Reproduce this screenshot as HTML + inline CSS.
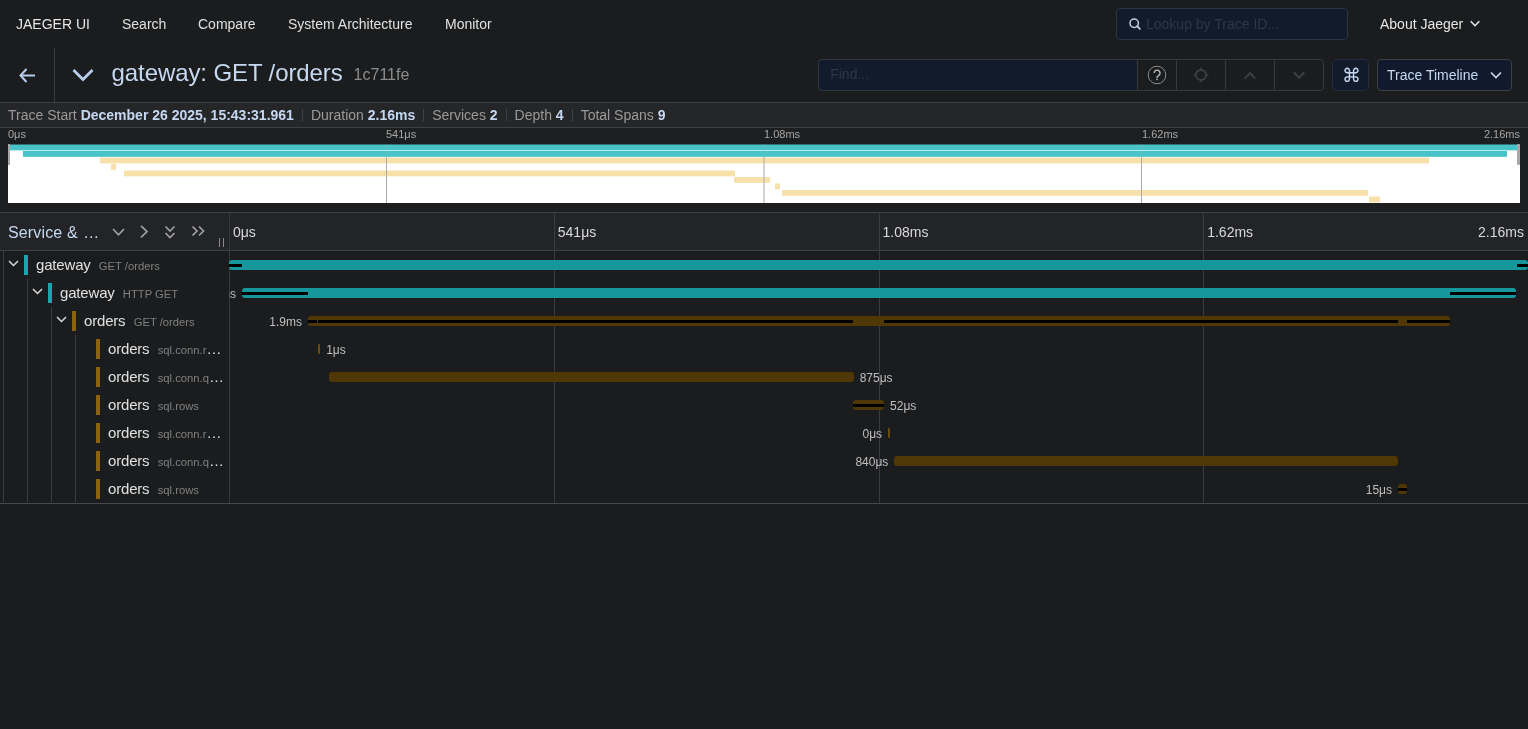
<!DOCTYPE html>
<html><head><meta charset="utf-8">
<style>
*{box-sizing:border-box;margin:0;padding:0}
html,body{width:1528px;height:729px;overflow:hidden;background:#1b1c1e;font-family:"Liberation Sans",sans-serif;color:#d9d9d9}
.abs{position:absolute}
.t{position:absolute;white-space:pre;line-height:1}
svg{position:absolute;overflow:visible}
</style></head><body><div style="position:absolute;left:0;top:0;width:1528px;height:729px;overflow:hidden;will-change:transform">

<!-- NAV -->
<div class="abs" style="left:0;top:0;width:1528px;height:48px;background:#1b1c1e"></div>
<div class="t" style="left:16px;top:17px;font-size:14px;color:#e6e6e6">JAEGER UI</div>
<div class="t" style="left:122px;top:17px;font-size:14px;color:#e0e0e0">Search</div>
<div class="t" style="left:198px;top:17px;font-size:14px;color:#e0e0e0">Compare</div>
<div class="t" style="left:288px;top:17px;font-size:14px;color:#e0e0e0">System Architecture</div>
<div class="t" style="left:445px;top:17px;font-size:14px;color:#e0e0e0">Monitor</div>

<div class="abs" style="left:1116px;top:8px;width:232px;height:32px;background:#111b2b;border:1px solid #2e3541;border-radius:4px"></div>
<svg style="left:1129px;top:18px" width="13" height="13" viewBox="0 0 13 13"><circle cx="5.2" cy="5.2" r="4.2" fill="none" stroke="#c0cfe3" stroke-width="1.5"/><line x1="8.2" y1="8.2" x2="10.9" y2="10.9" stroke="#c0cfe3" stroke-width="1.8" stroke-linecap="round"/></svg>
<div class="t" style="left:1146px;top:17px;font-size:14px;color:#2c3748">Lookup by Trace ID...</div>
<div class="t" style="left:1380px;top:17px;font-size:14px;color:#e6e6e6">About Jaeger</div>
<svg style="left:1470px;top:20px" width="10" height="8" viewBox="0 0 10 8"><polyline points="0.7,1.2 5,5.7 9.3,1.2" fill="none" stroke="#e6e6e6" stroke-width="1.6"/></svg>

<!-- TRACE HEADER -->
<div class="abs" style="left:54px;top:48px;width:1px;height:54px;background:#3a3b3e"></div>
<svg style="left:19px;top:68px" width="17" height="15" viewBox="0 0 17 15"><polyline points="7.5,1 1.5,7.5 7.5,14" fill="none" stroke="#b6cdeb" stroke-width="2"/><line x1="1.5" y1="7.5" x2="16" y2="7.5" stroke="#b6cdeb" stroke-width="2"/></svg>
<svg style="left:72px;top:68px" width="22" height="14" viewBox="0 0 22 14"><polyline points="1.5,2 11,11.5 20.5,2" fill="none" stroke="#b6cdeb" stroke-width="2.8"/></svg>
<div class="t" style="left:111.6px;top:61px;font-size:24px;letter-spacing:-0.1px;color:#c6d8f0">gateway: GET /orders</div>
<div class="t" style="left:353.6px;top:67px;font-size:16px;color:#8c8c8c">1c711fe</div>

<div class="abs" style="left:818px;top:59px;width:320px;height:32px;background:#111b2b;border:1px solid #2e3541;border-right:none;border-radius:4px 0 0 4px"></div>
<div class="t" style="left:830.2px;top:67.3px;font-size:14px;color:#2c3748">Find...</div>
<div class="abs" style="left:1137px;top:59px;width:187px;height:32px;border:1px solid #38393c;border-radius:0 4px 4px 0"></div>
<div class="abs" style="left:1176px;top:59px;width:1px;height:32px;background:#38393c"></div>
<div class="abs" style="left:1225px;top:59px;width:1px;height:32px;background:#38393c"></div>
<div class="abs" style="left:1274px;top:59px;width:1px;height:32px;background:#38393c"></div>
<svg style="left:1147px;top:65px" width="20" height="20" viewBox="0 0 20 20"><circle cx="10" cy="10" r="8.8" fill="none" stroke="#8c8c8c" stroke-width="1"/><path d="M7.2,8.1 A2.9,2.9 0 1 1 11.5,10.6 C10.5,11.2 10,11.7 10,12.6 V13" fill="none" stroke="#bdbdbd" stroke-width="1.3"/><circle cx="10" cy="14.4" r="0.8" fill="#bdbdbd"/></svg>
<svg style="left:1193px;top:67px" width="16" height="16" viewBox="0 0 16 16"><circle cx="8" cy="8" r="5" fill="none" stroke="#3d3e41" stroke-width="2"/><line x1="8" y1="0.5" x2="8" y2="3" stroke="#3d3e41" stroke-width="1.6"/><line x1="8" y1="13" x2="8" y2="15.5" stroke="#3d3e41" stroke-width="1.6"/><line x1="0.5" y1="8" x2="3" y2="8" stroke="#3d3e41" stroke-width="1.6"/><line x1="13" y1="8" x2="15.5" y2="8" stroke="#3d3e41" stroke-width="1.6"/></svg>
<svg style="left:1244px;top:71px" width="12" height="9" viewBox="0 0 12 9"><polyline points="0.8,7.6 6,2 11.2,7.6" fill="none" stroke="#3d3e41" stroke-width="2"/></svg>
<svg style="left:1293px;top:71px" width="12" height="9" viewBox="0 0 12 9"><polyline points="0.8,1.2 6,6.8 11.2,1.2" fill="none" stroke="#3d3e41" stroke-width="2"/></svg>

<div class="abs" style="left:1332px;top:59px;width:37px;height:32px;background:#111b2b;border:1px solid #262c42;border-radius:5px"></div>
<div class="t" style="left:1341.5px;top:65.5px;font-size:19px;color:#c6d8f0">⌘</div>
<div class="abs" style="left:1377px;top:59px;width:135px;height:32px;background:#111a2c;border:1px solid #3c3f47;border-radius:4px"></div>
<div class="t" style="left:1387px;top:68px;font-size:14px;color:#c6d8f0">Trace Timeline</div>
<svg style="left:1490px;top:71px" width="12" height="8" viewBox="0 0 12 8"><polyline points="1,1.5 6,6.5 11,1.5" fill="none" stroke="#c6d8f0" stroke-width="1.7"/></svg>


<!-- STATS BAR -->
<div class="abs" style="left:0;top:102px;width:1528px;height:26px;background:#252628;border-top:1px solid #3f4043;border-bottom:1px solid #3f4043"></div>
<div class="abs" style="left:8px;top:108px;height:14px;display:flex;align-items:flex-start;font-size:14px;line-height:1;white-space:pre">
<span style="color:#9a9a9a">Trace Start <b style="color:#c6d8f0;font-weight:700">December 26 2025, 15:43:31.961</b></span>
<span style="display:inline-block;width:1px;height:12px;margin:1px 8px 0 8px;background:#414246"></span>
<span style="color:#9a9a9a">Duration <b style="color:#c6d8f0;font-weight:700">2.16ms</b></span>
<span style="display:inline-block;width:1px;height:12px;margin:1px 8px 0 8px;background:#414246"></span>
<span style="color:#9a9a9a">Services <b style="color:#c6d8f0;font-weight:700">2</b></span>
<span style="display:inline-block;width:1px;height:12px;margin:1px 8px 0 8px;background:#414246"></span>
<span style="color:#9a9a9a">Depth <b style="color:#c6d8f0;font-weight:700">4</b></span>
<span style="display:inline-block;width:1px;height:12px;margin:1px 8px 0 8px;background:#414246"></span>
<span style="color:#9a9a9a">Total Spans <b style="color:#c6d8f0;font-weight:700">9</b></span>
</div>
<!-- MINIMAP -->
<div class="abs" style="left:0;top:128px;width:1528px;height:84px;background:#1d1e20"></div>
<div class="t" style="left:8px;top:128.5px;font-size:11px;color:#a6a6a6">0μs</div>
<div class="t" style="left:386px;top:128.5px;font-size:11px;color:#a6a6a6">541μs</div>
<div class="t" style="left:764px;top:128.5px;font-size:11px;color:#a6a6a6">1.08ms</div>
<div class="t" style="left:1142px;top:128.5px;font-size:11px;color:#a6a6a6">1.62ms</div>
<div class="t" style="right:8px;top:128.5px;font-size:11px;color:#a6a6a6">2.16ms</div>
<div class="abs" style="left:8px;top:144px;width:1512px;height:60px;overflow:hidden">
<div class="abs" style="left:0;top:1px;width:1512px;height:58px;background:#fff"></div>
<div class="abs" style="left:0;top:59px;width:1512px;height:1px;background:#fff;opacity:0.0"></div>
<div class="abs" style="left:0.00px;top:0px;width:1512.00px;height:1px;background:#48c3c8;opacity:0.50"></div>
<div class="abs" style="left:0.00px;top:1px;width:1512.00px;height:1px;background:#48c3c8;opacity:1.00"></div>
<div class="abs" style="left:0.00px;top:2px;width:1512.00px;height:1px;background:#48c3c8;opacity:1.00"></div>
<div class="abs" style="left:0.00px;top:3px;width:1512.00px;height:1px;background:#48c3c8;opacity:1.00"></div>
<div class="abs" style="left:0.00px;top:4px;width:1512.00px;height:1px;background:#48c3c8;opacity:1.00"></div>
<div class="abs" style="left:0.00px;top:5px;width:1512.00px;height:1px;background:#48c3c8;opacity:1.00"></div>
<div class="abs" style="left:0.00px;top:6px;width:1512.00px;height:1px;background:#48c3c8;opacity:0.35"></div>
<div class="abs" style="left:15.16px;top:7px;width:1483.35px;height:1px;background:#48c3c8;opacity:1.00"></div>
<div class="abs" style="left:15.16px;top:8px;width:1483.35px;height:1px;background:#48c3c8;opacity:1.00"></div>
<div class="abs" style="left:15.16px;top:9px;width:1483.35px;height:1px;background:#48c3c8;opacity:1.00"></div>
<div class="abs" style="left:15.16px;top:10px;width:1483.35px;height:1px;background:#48c3c8;opacity:1.00"></div>
<div class="abs" style="left:15.16px;top:11px;width:1483.35px;height:1px;background:#48c3c8;opacity:1.00"></div>
<div class="abs" style="left:15.16px;top:12px;width:1483.35px;height:1px;background:#48c3c8;opacity:0.85"></div>
<div class="abs" style="left:91.95px;top:13px;width:1328.94px;height:1px;background:#f8e0aa;opacity:0.50"></div>
<div class="abs" style="left:91.95px;top:14px;width:1328.94px;height:1px;background:#f8e0aa;opacity:1.00"></div>
<div class="abs" style="left:91.95px;top:15px;width:1328.94px;height:1px;background:#f8e0aa;opacity:1.00"></div>
<div class="abs" style="left:91.95px;top:16px;width:1328.94px;height:1px;background:#f8e0aa;opacity:1.00"></div>
<div class="abs" style="left:91.95px;top:17px;width:1328.94px;height:1px;background:#f8e0aa;opacity:1.00"></div>
<div class="abs" style="left:91.95px;top:18px;width:1328.94px;height:1px;background:#f8e0aa;opacity:1.00"></div>
<div class="abs" style="left:91.95px;top:19px;width:1328.94px;height:1px;background:#f8e0aa;opacity:0.35"></div>
<div class="abs" style="left:102.71px;top:20px;width:4.95px;height:1px;background:#f8e0aa;opacity:1.00"></div>
<div class="abs" style="left:102.71px;top:21px;width:4.95px;height:1px;background:#f8e0aa;opacity:1.00"></div>
<div class="abs" style="left:102.71px;top:22px;width:4.95px;height:1px;background:#f8e0aa;opacity:1.00"></div>
<div class="abs" style="left:102.71px;top:23px;width:4.95px;height:1px;background:#f8e0aa;opacity:1.00"></div>
<div class="abs" style="left:102.71px;top:24px;width:4.95px;height:1px;background:#f8e0aa;opacity:1.00"></div>
<div class="abs" style="left:102.71px;top:25px;width:4.95px;height:1px;background:#f8e0aa;opacity:0.85"></div>
<div class="abs" style="left:116.40px;top:26px;width:610.67px;height:1px;background:#f8e0aa;opacity:0.50"></div>
<div class="abs" style="left:116.40px;top:27px;width:610.67px;height:1px;background:#f8e0aa;opacity:1.00"></div>
<div class="abs" style="left:116.40px;top:28px;width:610.67px;height:1px;background:#f8e0aa;opacity:1.00"></div>
<div class="abs" style="left:116.40px;top:29px;width:610.67px;height:1px;background:#f8e0aa;opacity:1.00"></div>
<div class="abs" style="left:116.40px;top:30px;width:610.67px;height:1px;background:#f8e0aa;opacity:1.00"></div>
<div class="abs" style="left:116.40px;top:31px;width:610.67px;height:1px;background:#f8e0aa;opacity:1.00"></div>
<div class="abs" style="left:116.40px;top:32px;width:610.67px;height:1px;background:#f8e0aa;opacity:0.35"></div>
<div class="abs" style="left:725.96px;top:33px;width:36.33px;height:1px;background:#f8e0aa;opacity:1.00"></div>
<div class="abs" style="left:725.96px;top:34px;width:36.33px;height:1px;background:#f8e0aa;opacity:1.00"></div>
<div class="abs" style="left:725.96px;top:35px;width:36.33px;height:1px;background:#f8e0aa;opacity:1.00"></div>
<div class="abs" style="left:725.96px;top:36px;width:36.33px;height:1px;background:#f8e0aa;opacity:1.00"></div>
<div class="abs" style="left:725.96px;top:37px;width:36.33px;height:1px;background:#f8e0aa;opacity:1.00"></div>
<div class="abs" style="left:725.96px;top:38px;width:36.33px;height:1px;background:#f8e0aa;opacity:0.85"></div>
<div class="abs" style="left:767.04px;top:39px;width:4.95px;height:1px;background:#f8e0aa;opacity:0.50"></div>
<div class="abs" style="left:767.04px;top:40px;width:4.95px;height:1px;background:#f8e0aa;opacity:1.00"></div>
<div class="abs" style="left:767.04px;top:41px;width:4.95px;height:1px;background:#f8e0aa;opacity:1.00"></div>
<div class="abs" style="left:767.04px;top:42px;width:4.95px;height:1px;background:#f8e0aa;opacity:1.00"></div>
<div class="abs" style="left:767.04px;top:43px;width:4.95px;height:1px;background:#f8e0aa;opacity:1.00"></div>
<div class="abs" style="left:767.04px;top:44px;width:4.95px;height:1px;background:#f8e0aa;opacity:1.00"></div>
<div class="abs" style="left:767.04px;top:45px;width:4.95px;height:1px;background:#f8e0aa;opacity:0.35"></div>
<div class="abs" style="left:774.17px;top:46px;width:586.21px;height:1px;background:#f8e0aa;opacity:1.00"></div>
<div class="abs" style="left:774.17px;top:47px;width:586.21px;height:1px;background:#f8e0aa;opacity:1.00"></div>
<div class="abs" style="left:774.17px;top:48px;width:586.21px;height:1px;background:#f8e0aa;opacity:1.00"></div>
<div class="abs" style="left:774.17px;top:49px;width:586.21px;height:1px;background:#f8e0aa;opacity:1.00"></div>
<div class="abs" style="left:774.17px;top:50px;width:586.21px;height:1px;background:#f8e0aa;opacity:1.00"></div>
<div class="abs" style="left:774.17px;top:51px;width:586.21px;height:1px;background:#f8e0aa;opacity:0.85"></div>
<div class="abs" style="left:1360.66px;top:52px;width:10.97px;height:1px;background:#f8e0aa;opacity:0.50"></div>
<div class="abs" style="left:1360.66px;top:53px;width:10.97px;height:1px;background:#f8e0aa;opacity:1.00"></div>
<div class="abs" style="left:1360.66px;top:54px;width:10.97px;height:1px;background:#f8e0aa;opacity:1.00"></div>
<div class="abs" style="left:1360.66px;top:55px;width:10.97px;height:1px;background:#f8e0aa;opacity:1.00"></div>
<div class="abs" style="left:1360.66px;top:56px;width:10.97px;height:1px;background:#f8e0aa;opacity:1.00"></div>
<div class="abs" style="left:1360.66px;top:57px;width:10.97px;height:1px;background:#f8e0aa;opacity:1.00"></div>
<div class="abs" style="left:1360.66px;top:58px;width:10.97px;height:1px;background:#f8e0aa;opacity:0.35"></div>
<div class="abs" style="left:378px;top:0;width:1px;height:13px;background:#aaa;opacity:0.25"></div>
<div class="abs" style="left:755px;top:0;width:2px;height:13px;background:rgba(170,170,170,0.12)"></div>
<div class="abs" style="left:1133px;top:0;width:1px;height:13px;background:#aaa;opacity:0.25"></div>
<div class="abs" style="left:378px;top:13px;width:1px;height:46px;background:#aaa"></div>
<div class="abs" style="left:755px;top:13px;width:2px;height:46px;background:rgba(170,170,170,0.5)"></div>
<div class="abs" style="left:1133px;top:13px;width:1px;height:46px;background:#aaa"></div>
</div>
<div class="abs" style="left:8px;top:144px;width:2px;height:21px;background:#a8a8a8"></div>
<div class="abs" style="left:1517px;top:144px;width:3px;height:21px;background:#a8a8a8;border-radius:1px"></div>
<!-- SPAN HEADER -->
<div class="abs" style="left:0;top:212px;width:1528px;height:39px;background:#232427;border-top:1px solid #3f4043;border-bottom:1px solid #3f4043"></div>
<div class="t" style="left:8px;top:224.5px;font-size:16px;color:#c6d8f0"><span style="letter-spacing:0.15px">Service &amp; </span><span style="margin-left:0.8px">…</span></div>
<svg style="left:112px;top:227.7px" width="14" height="9" viewBox="0 0 14 9"><polyline points="1,1 6.5,6.8 12,1" fill="none" stroke="#a0a0a0" stroke-width="1.7"/></svg>
<svg style="left:140px;top:224.8px" width="9" height="14" viewBox="0 0 9 14"><polyline points="1,0.8 7,6.6 1,12.4" fill="none" stroke="#a0a0a0" stroke-width="1.7"/></svg>
<svg style="left:164px;top:224.9px" width="13" height="15" viewBox="0 0 13 15"><polyline points="1.5,1.5 6,6 10.5,1.5" fill="none" stroke="#a0a0a0" stroke-width="1.7"/><polyline points="1.5,8 6,12.5 10.5,8" fill="none" stroke="#a0a0a0" stroke-width="1.7"/></svg>
<svg style="left:190.8px;top:225px" width="15" height="13" viewBox="0 0 15 13"><polyline points="1.5,1.5 6,6 1.5,10.5" fill="none" stroke="#a0a0a0" stroke-width="1.7"/><polyline points="8,1.5 12.5,6 8,10.5" fill="none" stroke="#a0a0a0" stroke-width="1.7"/></svg>
<div class="abs" style="left:219px;top:238px;width:1px;height:9px;background:#8a8a8a"></div>
<div class="abs" style="left:223px;top:238px;width:1px;height:9px;background:#8a8a8a"></div>
<div class="abs" style="left:229px;top:212px;width:1px;height:291px;background:#38393c"></div>
<div class="t" style="left:233.0px;top:224.8px;font-size:14px;color:#d9d9d9">0μs</div>
<div class="abs" style="left:554px;top:213px;width:1px;height:290px;background:#3a3b3e"></div>
<div class="t" style="left:557.8px;top:224.8px;font-size:14px;color:#d9d9d9">541μs</div>
<div class="abs" style="left:879px;top:213px;width:1px;height:290px;background:#3a3b3e"></div>
<div class="t" style="left:882.5px;top:224.8px;font-size:14px;color:#d9d9d9">1.08ms</div>
<div class="abs" style="left:1203px;top:213px;width:1px;height:290px;background:#3a3b3e"></div>
<div class="t" style="left:1207.2px;top:224.8px;font-size:14px;color:#d9d9d9">1.62ms</div>
<div class="t" style="right:4px;top:224.8px;font-size:14px;color:#d9d9d9">2.16ms</div>
<!-- ROWS -->
<div class="abs" style="left:0;top:503px;width:1528px;height:1px;background:#47484b"></div>
<div class="abs" style="left:229.0px;top:260px;width:1299.0px;height:10px;background:#16979c;border-radius:3px"></div>
<div class="abs" style="left:229.0px;top:264px;width:13.0px;height:3px;background:#000"></div>
<div class="abs" style="left:1517.0px;top:264px;width:11.0px;height:3px;background:#000"></div>
<div class="abs" style="left:242.0px;top:288px;width:1274.3px;height:10px;background:#16979c;border-radius:3px"></div>
<div class="abs" style="left:242.0px;top:292px;width:66.0px;height:3px;background:#000"></div>
<div class="abs" style="left:1450.0px;top:292px;width:66.3px;height:3px;background:#000"></div>
<div class="t" style="right:1292.0px;top:288px;font-size:12px;color:#bfbfbf">2.12ms</div>
<div class="abs" style="left:308.0px;top:316px;width:1142.0px;height:10px;background:#4f3806;border-radius:3px"></div>
<div class="abs" style="left:308.0px;top:320px;width:9.0px;height:3px;background:#000"></div>
<div class="abs" style="left:318.0px;top:320px;width:535.0px;height:3px;background:#000"></div>
<div class="abs" style="left:884.0px;top:320px;width:514.0px;height:3px;background:#000"></div>
<div class="abs" style="left:1407.0px;top:320px;width:43.0px;height:3px;background:#000"></div>
<div class="t" style="right:1226.0px;top:316px;font-size:12px;color:#bfbfbf">1.9ms</div>
<div class="abs" style="left:317.7px;top:344px;width:2px;height:10px;background:#6d4c0f;border-radius:1px"></div>
<div class="t" style="left:326.2px;top:344px;font-size:12px;color:#bfbfbf">1μs</div>
<div class="abs" style="left:329.0px;top:372px;width:524.7px;height:10px;background:#4f3806;border-radius:3px"></div>
<div class="t" style="left:859.7px;top:372px;font-size:12px;color:#bfbfbf">875μs</div>
<div class="abs" style="left:853.0px;top:400px;width:31.1px;height:10px;background:#4f3806;border-radius:3px"></div>
<div class="abs" style="left:853.0px;top:404px;width:31.1px;height:3px;background:#000"></div>
<div class="t" style="left:890.1px;top:400px;font-size:12px;color:#bfbfbf">52μs</div>
<div class="abs" style="left:888.4px;top:428px;width:2px;height:10px;background:#6d4c0f;border-radius:1px"></div>
<div class="t" style="right:645.9px;top:428px;font-size:12px;color:#bfbfbf">0μs</div>
<div class="abs" style="left:894.3px;top:456px;width:503.6px;height:10px;background:#4f3806;border-radius:3px"></div>
<div class="t" style="right:639.7px;top:456px;font-size:12px;color:#bfbfbf">840μs</div>
<div class="abs" style="left:1398.0px;top:484px;width:9.4px;height:10px;background:#4f3806;border-radius:3px"></div>
<div class="abs" style="left:1398.0px;top:488px;width:9.4px;height:3px;background:#000"></div>
<div class="t" style="right:136.0px;top:484px;font-size:12px;color:#bfbfbf">15μs</div>
<div class="abs" style="left:0;top:251px;width:229px;height:251px;background:#1b1c1e"></div>
<svg style="left:7.5px;top:259.5px" width="12" height="8" viewBox="0 0 12 8"><polyline points="1,1 5.5,5.5 10,1" fill="none" stroke="#d9d9d9" stroke-width="1.5"/></svg>
<div class="abs" style="left:24px;top:255px;width:4px;height:20px;background:#17a7ad"></div>
<div class="abs" style="left:36px;top:255px;width:190px;height:20px;overflow:hidden;white-space:nowrap;text-overflow:ellipsis;line-height:20px;color:#e0e0e0;font-size:15px"><span style="letter-spacing:-0.18px;margin-right:8.2px">gateway</span><span style="font-size:11.25px;color:#808080">GET /orders</span></div>
<svg style="left:31.5px;top:287.5px" width="12" height="8" viewBox="0 0 12 8"><polyline points="1,1 5.5,5.5 10,1" fill="none" stroke="#d9d9d9" stroke-width="1.5"/></svg>
<div class="abs" style="left:48px;top:283px;width:4px;height:20px;background:#17a7ad"></div>
<div class="abs" style="left:60px;top:283px;width:166px;height:20px;overflow:hidden;white-space:nowrap;text-overflow:ellipsis;line-height:20px;color:#e0e0e0;font-size:15px"><span style="letter-spacing:-0.18px;margin-right:8.2px">gateway</span><span style="font-size:11.25px;color:#808080">HTTP GET</span></div>
<svg style="left:55.5px;top:315.5px" width="12" height="8" viewBox="0 0 12 8"><polyline points="1,1 5.5,5.5 10,1" fill="none" stroke="#d9d9d9" stroke-width="1.5"/></svg>
<div class="abs" style="left:72px;top:311px;width:4px;height:20px;background:#8a6212"></div>
<div class="abs" style="left:84px;top:311px;width:142px;height:20px;overflow:hidden;white-space:nowrap;text-overflow:ellipsis;line-height:20px;color:#e0e0e0;font-size:15px"><span style="letter-spacing:-0.18px;margin-right:8.2px">orders</span><span style="font-size:11.25px;color:#808080">GET /orders</span></div>
<div class="abs" style="left:96px;top:339px;width:4px;height:20px;background:#8a6212"></div>
<div class="abs" style="left:108px;top:339px;width:118px;height:20px;overflow:hidden;white-space:nowrap;text-overflow:ellipsis;line-height:20px;color:#e0e0e0;font-size:15px"><span style="letter-spacing:-0.18px;margin-right:8.2px">orders</span><span style="font-size:11.25px;color:#808080">sql.conn.reset</span></div>
<div class="abs" style="left:96px;top:367px;width:4px;height:20px;background:#8a6212"></div>
<div class="abs" style="left:108px;top:367px;width:118px;height:20px;overflow:hidden;white-space:nowrap;text-overflow:ellipsis;line-height:20px;color:#e0e0e0;font-size:15px"><span style="letter-spacing:-0.18px;margin-right:8.2px">orders</span><span style="font-size:11.25px;color:#808080">sql.conn.query</span></div>
<div class="abs" style="left:96px;top:395px;width:4px;height:20px;background:#8a6212"></div>
<div class="abs" style="left:108px;top:395px;width:118px;height:20px;overflow:hidden;white-space:nowrap;text-overflow:ellipsis;line-height:20px;color:#e0e0e0;font-size:15px"><span style="letter-spacing:-0.18px;margin-right:8.2px">orders</span><span style="font-size:11.25px;color:#808080">sql.rows</span></div>
<div class="abs" style="left:96px;top:423px;width:4px;height:20px;background:#8a6212"></div>
<div class="abs" style="left:108px;top:423px;width:118px;height:20px;overflow:hidden;white-space:nowrap;text-overflow:ellipsis;line-height:20px;color:#e0e0e0;font-size:15px"><span style="letter-spacing:-0.18px;margin-right:8.2px">orders</span><span style="font-size:11.25px;color:#808080">sql.conn.reset</span></div>
<div class="abs" style="left:96px;top:451px;width:4px;height:20px;background:#8a6212"></div>
<div class="abs" style="left:108px;top:451px;width:118px;height:20px;overflow:hidden;white-space:nowrap;text-overflow:ellipsis;line-height:20px;color:#e0e0e0;font-size:15px"><span style="letter-spacing:-0.18px;margin-right:8.2px">orders</span><span style="font-size:11.25px;color:#808080">sql.conn.query</span></div>
<div class="abs" style="left:96px;top:479px;width:4px;height:20px;background:#8a6212"></div>
<div class="abs" style="left:108px;top:479px;width:118px;height:20px;overflow:hidden;white-space:nowrap;text-overflow:ellipsis;line-height:20px;color:#e0e0e0;font-size:15px"><span style="letter-spacing:-0.18px;margin-right:8.2px">orders</span><span style="font-size:11.25px;color:#808080">sql.rows</span></div>
<div class="abs" style="left:3px;top:251px;width:1px;height:251px;background:#3c3d40"></div>
<div class="abs" style="left:27px;top:279px;width:1px;height:223px;background:#3c3d40"></div>
<div class="abs" style="left:51px;top:307px;width:1px;height:195px;background:#3c3d40"></div>
<div class="abs" style="left:75px;top:335px;width:1px;height:167px;background:#3c3d40"></div>
</div></body></html>
